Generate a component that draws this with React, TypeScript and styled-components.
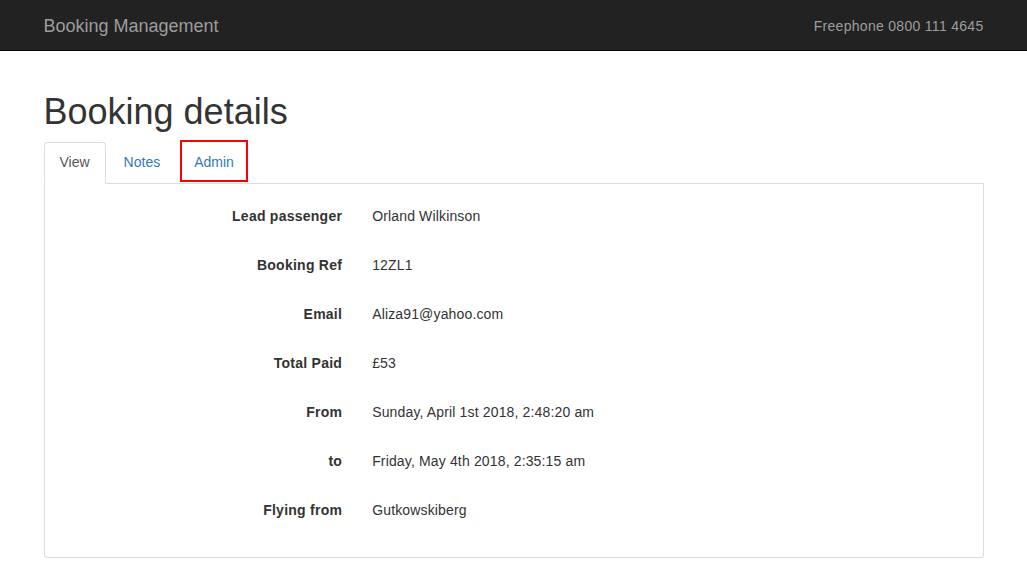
import React from "react";
import styled, { createGlobalStyle } from "styled-components";

const GlobalStyle = createGlobalStyle`
  *, *::before, *::after { box-sizing: border-box; }
  html, body { margin: 0; padding: 0; }
  body {
    font-family: "Liberation Sans", Arial, Helvetica, sans-serif;
    font-size: 14px;
    line-height: 1.42857143;
    color: #333;
    background: #fff;
    letter-spacing: 0.2px;
  }
`;

const Navbar = styled.nav`
  background: #222;
  border-bottom: 1px solid #080808;
  height: 51px;
  margin-bottom: 21px;
`;

const Container = styled.div`
  width: 970px;
  margin: 0 auto;
  padding: 0 15px;
  display: flow-root;
`;

const NavInner = styled(Container)`
  display: flex;
  justify-content: space-between;
  align-items: flex-start;
  height: 50px;
  padding-top: 16px;
`;

const Brand = styled.a`
  font-size: 18px;
  line-height: 20px;
  letter-spacing: 0;
  color: #9d9d9d;
  text-decoration: none;
`;

const NavText = styled.p`
  margin: 0;
  color: #9d9d9d;
  font-size: 14px;
  line-height: 20px;
  letter-spacing: 0.3px;
`;

const Title = styled.h1`
  font-size: 36px;
  font-weight: 500;
  line-height: 1.1;
  letter-spacing: 0;
  margin: 20px 0 10px;
  color: #333;
`;

const Tabs = styled.ul`
  display: flex;
  list-style: none;
  margin: 0;
  padding: 0;
  border-bottom: 1px solid #ddd;
  letter-spacing: 0;
`;

const TabItem = styled.li`
  margin-bottom: -1px;
  margin-right: 2px;
`;

const TabLink = styled.a<{ $active?: boolean; $highlight?: boolean }>`
  position: relative;
  display: block;
  padding: 9px 15px 11px;
  line-height: 20px;
  border: 1px solid ${(p) => (p.$active ? "#ddd" : "transparent")};
  border-bottom-color: transparent;
  border-radius: 4px 4px 0 0;
  background: ${(p) => (p.$active ? "#fff" : "transparent")};
  color: ${(p) => (p.$active ? "#555" : "#337ab7")};
  text-decoration: none;
  cursor: pointer;

  ${(p) =>
    p.$highlight &&
    `
    &::after {
      content: "";
      position: absolute;
      top: -3px;
      left: 1px;
      right: 1px;
      bottom: 1px;
      border: 2px solid #ff0000;
      pointer-events: none;
    }
  `}
`;

const Panel = styled.div`
  border: 1px solid #ddd;
  border-top: none;
  border-radius: 0 0 4px 4px;
  padding: 15px 0;
  box-shadow: 0 1px 1px rgba(0, 0, 0, 0.05);
`;

const Row = styled.div`
  display: grid;
  grid-template-columns: 33.3333% 66.6667%;
  margin-bottom: 15px;
`;

const Label = styled.div`
  padding: 7px 15px;
  text-align: right;
  font-weight: bold;
  line-height: 20px;
  min-height: 34px;
  letter-spacing: 0.25px;
`;

const Value = styled.div`
  padding: 7px 15px;
  line-height: 20px;
  min-height: 34px;
  letter-spacing: 0.15px;
`;

const rows: [string, string][] = [
  ["Lead passenger", "Orland Wilkinson"],
  ["Booking Ref", "12ZL1"],
  ["Email", "Aliza91@yahoo.com"],
  ["Total Paid", "£53"],
  ["From", "Sunday, April 1st 2018, 2:48:20 am"],
  ["to", "Friday, May 4th 2018, 2:35:15 am"],
  ["Flying from", "Gutkowskiberg"],
];

export default function App() {
  return (
    <>
      <GlobalStyle />
      <Navbar>
        <NavInner>
          <Brand>Booking Management</Brand>
          <NavText>Freephone 0800 111 4645</NavText>
        </NavInner>
      </Navbar>
      <Container>
        <Title>Booking details</Title>
        <Tabs>
          <TabItem>
            <TabLink $active>View</TabLink>
          </TabItem>
          <TabItem>
            <TabLink>Notes</TabLink>
          </TabItem>
          <TabItem>
            <TabLink $highlight>Admin</TabLink>
          </TabItem>
        </Tabs>
        <Panel>
          {rows.map(([l, v]) => (
            <Row key={l}>
              <Label>{l}</Label>
              <Value>{v}</Value>
            </Row>
          ))}
        </Panel>
      </Container>
    </>
  );
}
